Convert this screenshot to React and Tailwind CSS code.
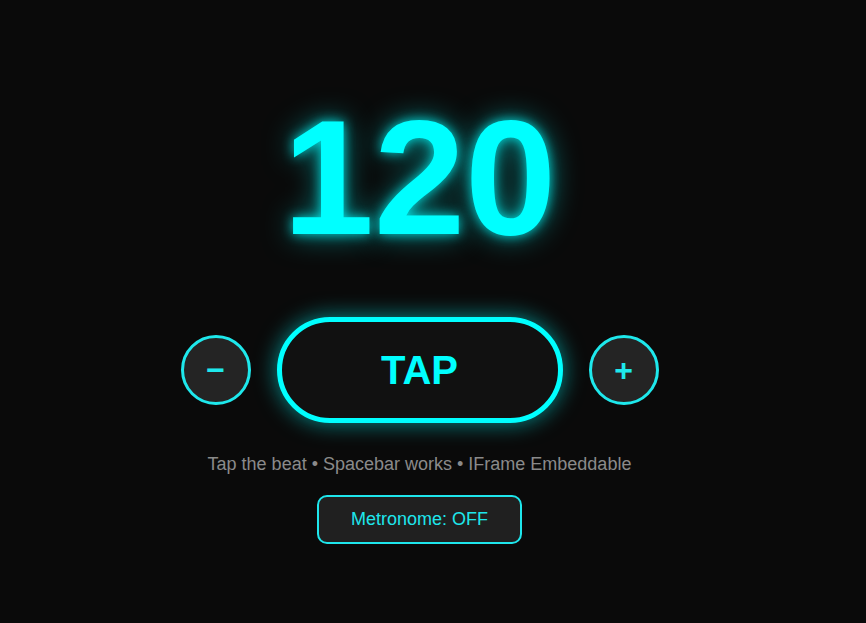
export default function App() {
  return (
    <div className="min-h-screen bg-[#0a0a0a] flex flex-col items-center pt-[96px] pr-[27px] font-['Liberation_Sans',Arial,sans-serif]">
      <div className="text-[164px] leading-none font-bold text-[#00ffff] [text-shadow:0_0_12px_rgba(0,255,255,0.8),0_0_30px_rgba(0,255,255,0.5)]">
        120
      </div>

      <div className="mt-[57px] flex items-center gap-[26px]">
        <button className="w-[70px] h-[70px] rounded-full border-[3px] border-[#1ee8ec] bg-[#242424] text-[#1ee8ec] text-[32px] font-bold leading-none flex items-center justify-center">
          −
        </button>
        <button className="w-[286px] h-[106px] rounded-full border-[5px] border-[#00ffff] bg-[#111111] text-[#00ffff] text-[40px] font-bold flex items-center justify-center shadow-[0_0_22px_rgba(0,255,255,0.55)]">
          TAP
        </button>
        <button className="w-[70px] h-[70px] rounded-full border-[3px] border-[#1ee8ec] bg-[#242424] text-[#1ee8ec] text-[32px] font-bold leading-none flex items-center justify-center">
          +
        </button>
      </div>

      <p className="mt-[31px] text-[18px] leading-[20px] text-[#8a8a8a]">
        Tap the beat • Spacebar works • IFrame Embeddable
      </p>

      <button className="mt-[21px] w-[205px] h-[49px] rounded-[10px] border-2 border-[#1ee6ec] bg-[#202020] text-[#1ee6ec] text-[18px]">
        Metronome: OFF
      </button>
    </div>
  );
}
